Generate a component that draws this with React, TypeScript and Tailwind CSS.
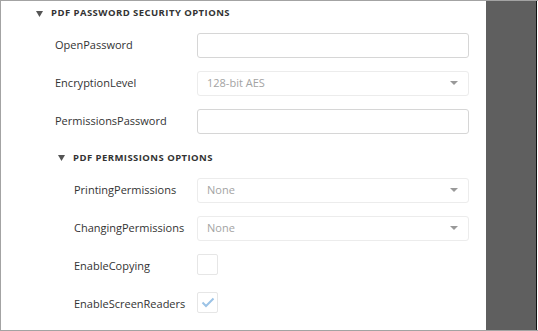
import React from "react";

const font = { fontFamily: '"Open Sans", "Noto Sans", sans-serif' };

function Caret({ className = "" }: { className?: string }) {
  return (
    <svg width="7" height="6" viewBox="0 0 7 6" className={className}>
      <path d="M0 0 H7 L3.5 6 Z" fill="#555" />
    </svg>
  );
}

function SelectArrow() {
  return (
    <svg width="8" height="4" viewBox="0 0 8 4">
      <path d="M0 0 H8 L4 4 Z" fill="#999" />
    </svg>
  );
}

function Label({ children }: { children: React.ReactNode }) {
  return <div className="text-[11px] text-[#333]">{children}</div>;
}

function TextInput() {
  return <div className="h-[25px] w-[272px] rounded-[3px] border border-[#d6d6d6] bg-white" />;
}

function Select({ value }: { value: string }) {
  return (
    <div className="flex h-[25px] w-[272px] items-center justify-between rounded-[3px] border border-[#ececec] bg-white pl-[9px] pr-[10px]">
      <span className="text-[11px] text-[#a3a3a3]">{value}</span>
      <SelectArrow />
    </div>
  );
}

function Check({ checked }: { checked?: boolean }) {
  return (
    <div className="-mt-[4px] flex h-[21px] w-[21px] items-center justify-center rounded-[2px] border border-[#e6e6e6] bg-white">
      {checked && (
        <svg width="14" height="11" viewBox="0 0 14 11">
          <path d="M1.5 5.5 L5 9 L12.5 1.5" stroke="#9cc3e6" strokeWidth="2" fill="none" />
        </svg>
      )}
    </div>
  );
}

function Row({ label, indent, children }: { label: string; indent: number; children: React.ReactNode }) {
  return (
    <div className="flex h-[38px] items-center">
      <div style={{ width: 196 - indent }} className="shrink-0">
        <Label>{label}</Label>
      </div>
      {children}
    </div>
  );
}

export default function App() {
  return (
    <div className="flex h-[331px] w-[538px] border-y border-l border-[#a3a3a3] bg-white" style={font}>
      <div className="flex w-[485px] flex-col">
        <div className="flex h-[25px] items-center pl-[35px]">
          <Caret className="mr-[8px]" />
          <span className="text-[9.5px] font-bold tracking-[0.45px] text-[#333]">PDF PASSWORD SECURITY OPTIONS</span>
        </div>
        <div className="flex flex-col pl-[54px]">
          <Row label="OpenPassword" indent={54}>
            <TextInput />
          </Row>
          <Row label="EncryptionLevel" indent={54}>
            <Select value="128-bit AES" />
          </Row>
          <Row label="PermissionsPassword" indent={54}>
            <TextInput />
          </Row>
        </div>
        <div className="flex h-[31px] items-center pl-[57px] pt-[5px]">
          <Caret className="mr-[8px]" />
          <span className="text-[9.5px] font-bold tracking-[0.45px] text-[#333]">PDF PERMISSIONS OPTIONS</span>
        </div>
        <div className="flex flex-col pl-[73px]">
          <Row label="PrintingPermissions" indent={73}>
            <Select value="None" />
          </Row>
          <Row label="ChangingPermissions" indent={73}>
            <Select value="None" />
          </Row>
          <Row label="EnableCopying" indent={73}>
            <Check />
          </Row>
          <Row label="EnableScreenReaders" indent={73}>
            <Check checked />
          </Row>
        </div>
      </div>
      <div className="w-[50px] bg-[#5f5f5f]" />
      <div className="w-px bg-[#111]" />
      <div className="w-px bg-white" />
    </div>
  );
}
